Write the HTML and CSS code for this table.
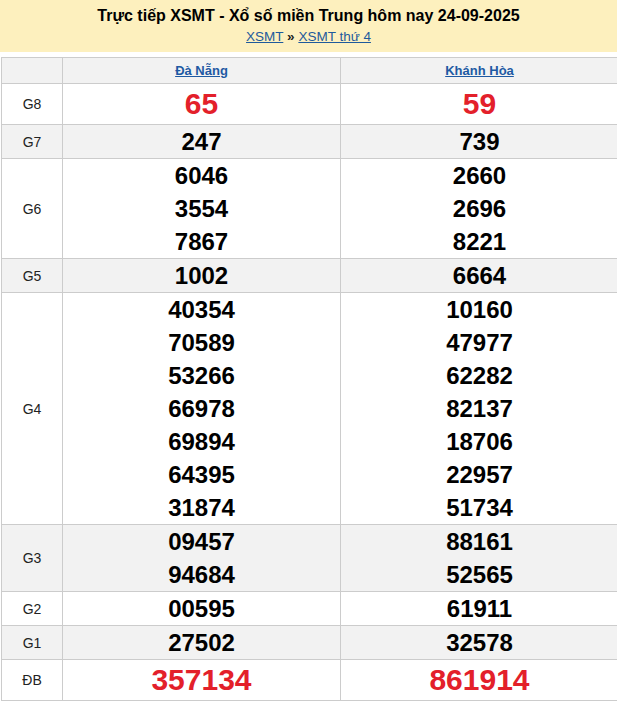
FILE: index.html
```html
<!DOCTYPE html>
<html lang="vi">
<head>
<meta charset="utf-8">
<title>XSMT 24-09-2025</title>
<link rel="stylesheet" href="styles.css">
</head>
<body>
<div class="head">
  <h1 class="title">Trực tiếp XSMT - Xổ số miền Trung hôm nay 24-09-2025</h1>
  <div class="crumbs"><a href="#">XSMT</a> <b>»</b> <a href="#">XSMT thứ 4</a></div>
</div>
<table class="result">
  <colgroup><col class="c-label"><col class="c-prov"><col class="c-prov"></colgroup>
  <thead>
    <tr class="alt hdr"><th></th><th><a href="#">Đà Nẵng</a></th><th><a href="#">Khánh Hòa</a></th></tr>
  </thead>
  <tbody>
    <tr class="big"><td class="lbl">G8</td><td><div class="n red">65</div></td><td><div class="n red">59</div></td></tr>
    <tr class="alt"><td class="lbl">G7</td><td><div class="n">247</div></td><td><div class="n">739</div></td></tr>
    <tr><td class="lbl">G6</td><td><div class="n">6046</div><div class="n">3554</div><div class="n">7867</div></td><td><div class="n">2660</div><div class="n">2696</div><div class="n">8221</div></td></tr>
    <tr class="alt"><td class="lbl">G5</td><td><div class="n">1002</div></td><td><div class="n">6664</div></td></tr>
    <tr><td class="lbl">G4</td><td><div class="n">40354</div><div class="n">70589</div><div class="n">53266</div><div class="n">66978</div><div class="n">69894</div><div class="n">64395</div><div class="n">31874</div></td><td><div class="n">10160</div><div class="n">47977</div><div class="n">62282</div><div class="n">82137</div><div class="n">18706</div><div class="n">22957</div><div class="n">51734</div></td></tr>
    <tr class="alt"><td class="lbl">G3</td><td><div class="n">09457</div><div class="n">94684</div></td><td><div class="n">88161</div><div class="n">52565</div></td></tr>
    <tr><td class="lbl">G2</td><td><div class="n">00595</div></td><td><div class="n">61911</div></td></tr>
    <tr class="alt"><td class="lbl">G1</td><td><div class="n">27502</div></td><td><div class="n">32578</div></td></tr>
    <tr class="big"><td class="lbl">ĐB</td><td><div class="n red">357134</div></td><td><div class="n red">861914</div></td></tr>
  </tbody>
</table>
</body>
</html>
```

FILE: styles.css
```css
html, body {
  margin: 0;
  padding: 0;
  overflow: hidden;
  background: #fff;
  font-family: "Liberation Sans", Arial, sans-serif;
  color: #000;
}

.head {
  background: #fdf0be;
  padding: 6px 0 5px;
  text-align: center;
}

.title {
  margin: 0;
  font-size: 16px;
  line-height: 20px;
  font-weight: bold;
  color: #000;
}

.crumbs {
  margin-top: 0;
  font-size: 13.5px;
  line-height: 21px;
  color: #222;
}

.crumbs a {
  color: #1e5a9c;
  text-decoration: underline;
}

.result {
  margin: 5px 0 0 1px;
  width: 618px;
  table-layout: fixed;
  border-collapse: collapse;
}

.c-label { width: 61px; }
.c-prov { width: 278px; }

.result th,
.result td {
  border: 1px solid #cccccc;
  padding: 0;
  text-align: center;
  vertical-align: middle;
}

.result tr.alt { background: #f2f2f2; }

.hdr th {
  height: 25px;
  font-size: 13px;
  font-weight: bold;
  line-height: 25px;
}

.hdr a {
  color: #1e5aa3;
  text-decoration: underline;
}

.lbl {
  font-size: 14px;
  color: #222;
}

.n {
  font-size: 24px;
  font-weight: bold;
  line-height: 33px;
  color: #000;
}

.big .n {
  line-height: 40px;
  font-size: 30px;
}

.n.red { color: #e3202a; }
```
